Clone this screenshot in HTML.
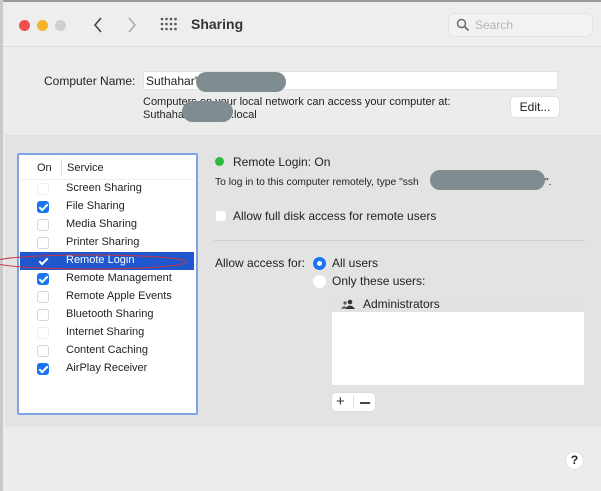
<!DOCTYPE html>
<html><head><meta charset="utf-8"><style>
*{margin:0;padding:0;box-sizing:border-box}
body{width:601px;height:491px;overflow:hidden;background:#edecec;font-family:"Liberation Sans",sans-serif;color:#222;position:relative}
.a{position:absolute;white-space:nowrap}
.t{font-size:11px}
.cb{position:absolute;width:12px;height:12px;border-radius:3px;background:#fff;border:1px solid #d6d6d6}
.cb.on{background:#1a73f0;border-color:#1a73f0}
.cb.on:after{content:"";position:absolute;left:3px;top:0px;width:3px;height:7px;border:solid #fff;border-width:0 2px 2px 0;transform:rotate(45deg)}
.blob{position:absolute;background:#7f8c90;border-radius:12px}
</style></head><body>
<div class="a" style="left:0;top:0;width:601px;height:2px;background:#9a9a9a"></div>
<div class="a" style="left:0;top:0;width:3px;height:491px;background:#c9c9c9"></div>
<div class="a" style="left:3px;top:2px;width:598px;height:45px;background:#efeeee;border-bottom:1px solid #dcdcdc"></div>
<div class="a" style="left:19px;top:20px;width:11px;height:11px;border-radius:50%;background:#f0504c"></div>
<div class="a" style="left:37px;top:20px;width:11px;height:11px;border-radius:50%;background:#f5b42a"></div>
<div class="a" style="left:55px;top:20px;width:11px;height:11px;border-radius:50%;background:#cfcfcf"></div>
<svg class="a" style="left:92px;top:16px" width="12" height="18"><path d="M9 2 L3 9 L9 16" stroke="#444" stroke-width="1.6" fill="none"/></svg>
<svg class="a" style="left:126px;top:16px" width="12" height="18"><path d="M3 2 L9 9 L3 16" stroke="#aaa" stroke-width="1.6" fill="none"/></svg>
<svg class="a" style="left:160px;top:17px" width="18" height="14"><g fill="#555"><circle cx="2" cy="2" r="1.3"/><circle cx="6.5" cy="2" r="1.3"/><circle cx="11" cy="2" r="1.3"/><circle cx="15.5" cy="2" r="1.3"/><circle cx="2" cy="7" r="1.3"/><circle cx="6.5" cy="7" r="1.3"/><circle cx="11" cy="7" r="1.3"/><circle cx="15.5" cy="7" r="1.3"/><circle cx="2" cy="12" r="1.3"/><circle cx="6.5" cy="12" r="1.3"/><circle cx="11" cy="12" r="1.3"/><circle cx="15.5" cy="12" r="1.3"/></g></svg>
<div class="a" style="left:191px;top:16px;font-size:14px;font-weight:bold;color:#333">Sharing</div>
<div class="a" style="left:448px;top:13px;width:145px;height:24px;border-radius:6px;background:#f3f2f2;border:1px solid #e3e3e3"></div>
<svg class="a" style="left:456px;top:18px" width="14" height="14"><circle cx="5.5" cy="5.5" r="4" stroke="#666" stroke-width="1.4" fill="none"/><path d="M8.5 8.5 L12.5 12.5" stroke="#666" stroke-width="1.6"/></svg>
<div class="a" style="left:475px;top:18px;font-size:12px;color:#b5b5b5">Search</div>

<div class="a" style="left:44px;top:74px;font-size:12px">Computer Name:</div>
<div class="a" style="left:143px;top:71px;width:415px;height:19px;background:#fff;border:1px solid #e2e2e2"></div>
<div class="a" style="left:146px;top:74px;font-size:12px">Suthahar'</div>
<div class="blob" style="left:196px;top:72px;width:90px;height:20px"></div>
<div class="a t" style="left:143px;top:96px">Computers on your local network can access your computer at:</div>
<div class="a t" style="left:143px;top:109px">Suthaha</div>
<div class="a t" style="left:231px;top:109px">.local</div>
<div class="blob" style="left:182px;top:101px;width:51px;height:21px"></div>
<div class="a" style="left:511px;top:97px;width:48px;height:20px;background:#fff;border-radius:4px;box-shadow:0 0 1px #aaa;font-size:12px;text-align:center;line-height:20px">Edit...</div>

<div class="a" style="left:5px;top:135px;width:596px;height:292px;background:#e4e3e3;border-top:1px solid #dedede"></div>

<div class="a" style="left:17px;top:153px;width:181px;height:262px;background:#fff;border:2.5px solid #7ea3e6;border-radius:2px"></div>
<div class="a t" style="left:37px;top:162px">On</div>
<div class="a" style="left:61px;top:159px;width:1px;height:16px;background:#ddd"></div>
<div class="a t" style="left:67px;top:162px">Service</div>
<div class="a" style="left:20px;top:179px;width:174px;height:1px;background:#eee"></div>
<div class="a" style="left:20px;top:252px;width:174px;height:18px;background:#1f57cf"></div>

<div class="cb" style="left:37px;top:183px;border-color:#eee"></div><div class="a t" style="left:66px;top:182px">Screen Sharing</div>
<div class="cb on" style="left:37px;top:201px"></div><div class="a t" style="left:66px;top:200px">File Sharing</div>
<div class="cb" style="left:37px;top:219px"></div><div class="a t" style="left:66px;top:218px">Media Sharing</div>
<div class="cb" style="left:37px;top:237px"></div><div class="a t" style="left:66px;top:236px">Printer Sharing</div>
<div class="cb on" style="left:37px;top:255px;background:transparent;border-color:transparent"></div><div class="a t" style="left:66px;top:254px;color:#fff">Remote Login</div>
<div class="cb on" style="left:37px;top:273px"></div><div class="a t" style="left:66px;top:272px">Remote Management</div>
<div class="cb" style="left:37px;top:291px"></div><div class="a t" style="left:66px;top:290px">Remote Apple Events</div>
<div class="cb" style="left:37px;top:309px"></div><div class="a t" style="left:66px;top:308px">Bluetooth Sharing</div>
<div class="cb" style="left:37px;top:327px;border-color:#eee"></div><div class="a t" style="left:66px;top:326px">Internet Sharing</div>
<div class="cb" style="left:37px;top:345px"></div><div class="a t" style="left:66px;top:344px">Content Caching</div>
<div class="cb on" style="left:37px;top:363px"></div><div class="a t" style="left:66px;top:362px">AirPlay Receiver</div>
<svg class="a" style="left:0;top:250px" width="200" height="24"><ellipse cx="90" cy="12" rx="96" ry="7" stroke="#c8353c" stroke-width="1" fill="none"/></svg>

<div class="a" style="left:215px;top:157px;width:9px;height:9px;border-radius:50%;background:#2dbb3d"></div>
<div class="a" style="left:233px;top:155px;font-size:12px">Remote Login: On</div>
<div class="a" style="left:215px;top:177px;font-size:10.3px">To log in to this computer remotely, type "ssh</div>
<div class="blob" style="left:430px;top:170px;width:115px;height:20px"></div>
<div class="a" style="left:545px;top:177px;font-size:10.3px">".</div>
<div class="cb" style="left:215px;top:210px;border-color:#e0e0e0"></div>
<div class="a" style="left:233px;top:209px;font-size:12px">Allow full disk access for remote users</div>
<div class="a" style="left:214px;top:240px;width:371px;height:1px;background:#d0d0d0"></div>
<div class="a" style="left:215px;top:256px;font-size:12px">Allow access for:</div>
<div class="a" style="left:313px;top:257px;width:13px;height:13px;border-radius:50%;background:#1a73f0"></div>
<div class="a" style="left:317px;top:261px;width:5px;height:5px;border-radius:50%;background:#fff"></div>
<div class="a" style="left:332px;top:256px;font-size:12px">All users</div>
<div class="a" style="left:313px;top:275px;width:13px;height:13px;border-radius:50%;background:#fff"></div>
<div class="a" style="left:332px;top:274px;font-size:12px">Only these users:</div>
<div class="a" style="left:332px;top:295px;width:252px;height:90px;background:#fff"></div>
<div class="a" style="left:332px;top:295px;width:252px;height:17px;background:#e2e2e2"></div>
<svg class="a" style="left:341px;top:299px" width="14" height="11"><circle cx="9" cy="3" r="2.3" fill="#333"/><path d="M4 10 Q9 3 14 10Z" fill="#333"/><circle cx="4" cy="4" r="1.6" fill="#555"/><path d="M0 10 Q3 5 6 9Z" fill="#555"/></svg>
<div class="a" style="left:363px;top:297px;font-size:12px">Administrators</div>
<div class="a" style="left:332px;top:393px;width:43px;height:18px;background:#fff;border-radius:4px;box-shadow:0 0 1px #bbb"></div>
<div class="a" style="left:336px;top:393px;font-size:15px;color:#333">+</div>
<div class="a" style="left:353px;top:396px;width:1px;height:12px;background:#e0e0e0"></div>
<div class="a" style="left:360px;top:402px;width:10px;height:1.5px;background:#444"></div>

<div class="a" style="left:566px;top:452px;width:17px;height:17px;border-radius:50%;background:#fff;box-shadow:0 0 1px #aaa;font-size:12px;font-weight:bold;text-align:center;line-height:17px">?</div>
</body></html>
